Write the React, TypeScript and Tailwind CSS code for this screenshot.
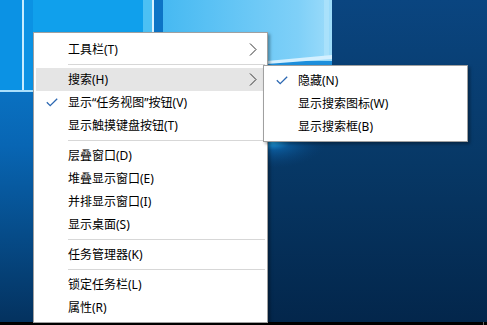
const font = "font-['Noto_Sans','Noto_Sans_CJK_SC',sans-serif]"

type Row =
  | { kind: 'item'; label: string; checked?: boolean; sub?: boolean; active?: boolean }
  | { kind: 'sep' }

const mainMenu: Row[] = [
  { kind: 'item', label: '工具栏(T)', sub: true },
  { kind: 'sep' },
  { kind: 'item', label: '搜索(H)', sub: true, active: true },
  { kind: 'item', label: '显示“任务视图”按钮(V)', checked: true },
  { kind: 'item', label: '显示触摸键盘按钮(T)' },
  { kind: 'sep' },
  { kind: 'item', label: '层叠窗口(D)' },
  { kind: 'item', label: '堆叠显示窗口(E)' },
  { kind: 'item', label: '并排显示窗口(I)' },
  { kind: 'item', label: '显示桌面(S)' },
  { kind: 'sep' },
  { kind: 'item', label: '任务管理器(K)' },
  { kind: 'sep' },
  { kind: 'item', label: '锁定任务栏(L)' },
  { kind: 'item', label: '属性(R)' },
]

const searchMenu = [
  { label: '隐藏(N)', checked: true },
  { label: '显示搜索图标(W)' },
  { label: '显示搜索框(B)' },
]

function Check() {
  return (
    <svg width="12" height="9" viewBox="0 0 12 9" className="block">
      <polyline points="0.8,4.2 4.2,7.6 11.2,0.8" fill="none" stroke="#2c68b2" strokeWidth="1.3" />
    </svg>
  )
}

function Chevron() {
  return (
    <svg width="8" height="13" viewBox="0 0 8 13" className="block">
      <polyline points="1,0.5 7,6.5 1,12.5" fill="none" stroke="#333" strokeWidth="1" />
    </svg>
  )
}

function Wallpaper() {
  return (
    <svg className="absolute inset-0" width="487" height="325" viewBox="0 0 487 325">
      <defs>
        <linearGradient id="dark" x1="0" y1="0" x2="0" y2="1">
          <stop offset="0" stopColor="#0a4580" />
          <stop offset="0.5" stopColor="#073866" />
          <stop offset="1" stopColor="#03264b" />
        </linearGradient>
        <linearGradient id="leftcol" x1="0" y1="0" x2="0" y2="1">
          <stop offset="0" stopColor="#0b84d8" />
          <stop offset="0.45" stopColor="#0866b4" />
          <stop offset="1" stopColor="#04325f" />
        </linearGradient>
        <linearGradient id="sky" x1="0" y1="0" x2="1" y2="0">
          <stop offset="0" stopColor="#46b9f2" />
          <stop offset="0.8" stopColor="#7fd0f8" />
          <stop offset="1" stopColor="#9ddcfa" />
        </linearGradient>
        <radialGradient id="glow" cx="0.1" cy="0" r="0.6">
          <stop offset="0" stopColor="#2ab6f6" />
          <stop offset="0.35" stopColor="#0e6fba" stopOpacity="0.55" />
          <stop offset="1" stopColor="#0a4580" stopOpacity="0" />
        </radialGradient>
      </defs>
      <rect width="487" height="325" fill="url(#dark)" />
      <rect x="0" y="0" width="33" height="322" fill="url(#leftcol)" />
      <rect x="0" y="0" width="152" height="91" fill="#0b92e4" />
      <rect x="33" y="0" width="117" height="32" fill="#10a0ec" />
      <rect x="143" y="0" width="9" height="32" fill="#4cc0f4" />
      <rect x="152" y="0" width="2" height="32" fill="#d8f2ff" />
      <rect x="154" y="0" width="9" height="32" fill="#0c74c6" />
      <rect x="163" y="0" width="169" height="61" fill="url(#sky)" />
      <rect x="324" y="0" width="5" height="58" fill="#b4e6fc" opacity="0.6" />
      <rect x="22" y="0" width="2" height="91" fill="#c6ecff" />
      <rect x="0" y="90" width="33" height="2" fill="#a9dffc" />
      <rect x="263" y="141" width="90" height="45" fill="url(#glow)" />
      <rect x="268" y="61" width="64" height="6" fill="#1d8fdc" />
      <polygon points="267,61 332,55 332,59 267,64" fill="#d4f0ff" />
      <rect x="0" y="322" width="487" height="3" fill="#000" />
      <rect x="483" y="322" width="1" height="3" fill="#6a6a6a" />
    </svg>
  )
}

function MenuItem({ label, checked, sub, active }: { label: string; checked?: boolean; sub?: boolean; active?: boolean }) {
  return (
    <div className={`h-[23px] flex items-center leading-[23px] whitespace-nowrap ${active ? 'bg-[#e5e5e5]' : ''}`}>
      <span className="w-[32px] shrink-0 flex items-center pl-[10px]">{checked && <Check />}</span>
      <span className="flex-1">{label}</span>
      {sub && (
        <span className="pr-[8px]">
          <Chevron />
        </span>
      )}
    </div>
  )
}

export default function App() {
  return (
    <div className={`relative w-[487px] h-[325px] overflow-hidden bg-[#073866] ${font} text-[12px] text-black`}>
      <Wallpaper />

      {/* taskbar context menu */}
      <div className="absolute left-[33px] top-[32px] w-[235px] flex flex-col bg-white border border-[#a0a0a0] pt-[5px] pb-[3px] px-[2px] shadow-[2px_2px_3px_rgba(0,0,0,0.35)]">
        {mainMenu.map((row, i) =>
          row.kind === 'sep' ? (
            <div key={i} className="h-[7px] flex items-center pl-[32px]">
              <div className="h-px flex-1 bg-[#d7d7d7]" />
            </div>
          ) : (
            <MenuItem key={i} label={row.label} checked={row.checked} sub={row.sub} active={row.active} />
          )
        )}
      </div>

      {/* search submenu */}
      <div className="absolute left-[263px] top-[65px] w-[205px] flex flex-col bg-white border border-[#a0a0a0] py-[3px] px-[2px] shadow-[2px_2px_3px_rgba(0,0,0,0.35)]">
        {searchMenu.map((row, i) => (
          <MenuItem key={i} label={row.label} checked={row.checked} />
        ))}
      </div>
    </div>
  )
}
